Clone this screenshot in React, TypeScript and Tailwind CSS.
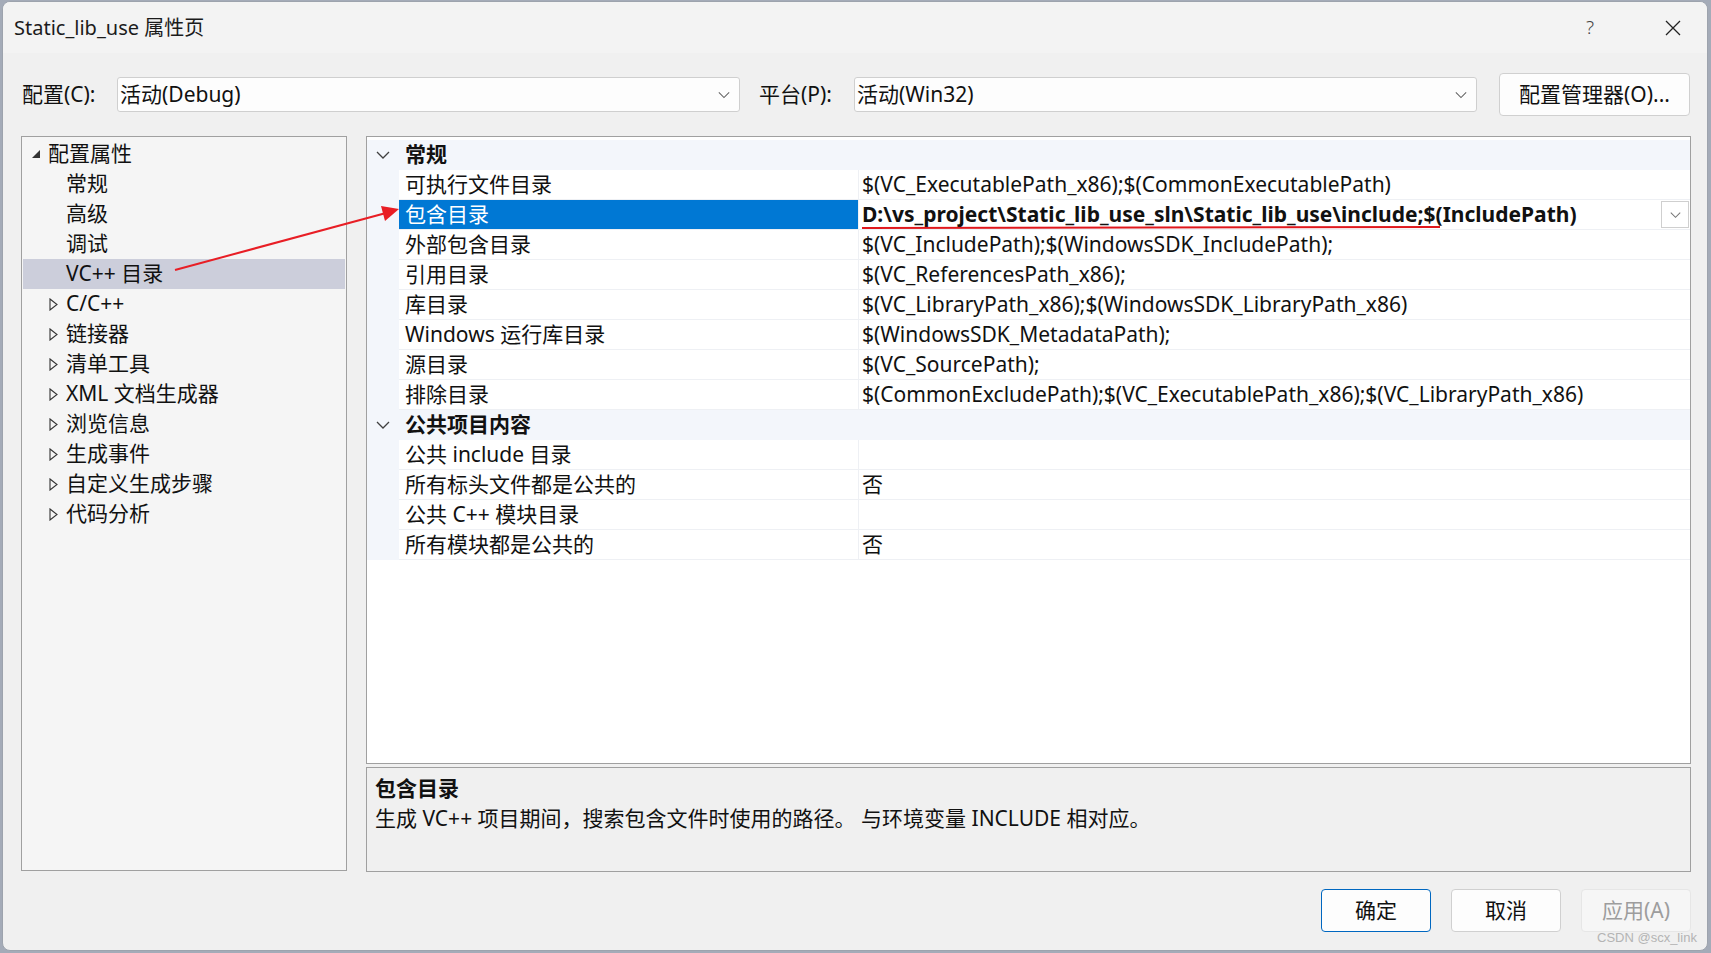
const FONT = { fontFamily: '"Noto Sans", "Noto Sans CJK SC", sans-serif' };

type Row =
  | { kind: 'group'; label: string }
  | { kind: 'prop'; label: string; value: string; selected?: boolean };

const rows: Row[] = [
  { kind: 'group', label: '常规' },
  { kind: 'prop', label: '可执行文件目录', value: '$(VC_ExecutablePath_x86);$(CommonExecutablePath)' },
  { kind: 'prop', label: '包含目录', value: 'D:\\vs_project\\Static_lib_use_sln\\Static_lib_use\\include;$(IncludePath)', selected: true },
  { kind: 'prop', label: '外部包含目录', value: '$(VC_IncludePath);$(WindowsSDK_IncludePath);' },
  { kind: 'prop', label: '引用目录', value: '$(VC_ReferencesPath_x86);' },
  { kind: 'prop', label: '库目录', value: '$(VC_LibraryPath_x86);$(WindowsSDK_LibraryPath_x86)' },
  { kind: 'prop', label: 'Windows 运行库目录', value: '$(WindowsSDK_MetadataPath);' },
  { kind: 'prop', label: '源目录', value: '$(VC_SourcePath);' },
  { kind: 'prop', label: '排除目录', value: '$(CommonExcludePath);$(VC_ExecutablePath_x86);$(VC_LibraryPath_x86)' },
  { kind: 'group', label: '公共项目内容' },
  { kind: 'prop', label: '公共 include 目录', value: '' },
  { kind: 'prop', label: '所有标头文件都是公共的', value: '否' },
  { kind: 'prop', label: '公共 C++ 模块目录', value: '' },
  { kind: 'prop', label: '所有模块都是公共的', value: '否' },
];

const tree = [
  { label: '常规' },
  { label: '高级' },
  { label: '调试' },
  { label: 'VC++ 目录', active: true },
  { label: 'C/C++', expandable: true },
  { label: '链接器', expandable: true },
  { label: '清单工具', expandable: true },
  { label: 'XML 文档生成器', expandable: true },
  { label: '浏览信息', expandable: true },
  { label: '生成事件', expandable: true },
  { label: '自定义生成步骤', expandable: true },
  { label: '代码分析', expandable: true },
];

function Chevron({ className = '', color = '#404040' }: { className?: string; color?: string }) {
  return (
    <svg width="14" height="8" viewBox="0 0 14 8" className={className}>
      <polyline points="1,1 7,7 13,1" fill="none" stroke={color} strokeWidth="1.3" />
    </svg>
  );
}

function SelectBox({ value }: { value: string }) {
  return (
    <div className="w-[623px] h-[35px] bg-[#fdfdfd] border border-[#cfcfcf] rounded-[3px] flex items-center justify-between pl-[2px] pr-[9px]">
      <span className="text-[21px] text-[#111]">{value}</span>
      <Chevron color="#666" className="w-[12px]" />
    </div>
  );
}

export default function App() {
  return (
    <div style={FONT} className="relative w-[1711px] h-[953px] bg-[#a4abb8] pl-[2px] pr-[3px] pt-px pb-[2px]">
      <div className="w-full h-full rounded-[8px] border border-[#9da3ad] bg-[#f0f0f0] overflow-hidden flex flex-col">
        {/* title bar */}
        <div className="h-[51px] bg-[#f3f3f3] flex items-center pl-[11px] pr-[26px] shrink-0">
          <span className="text-[20px] text-[#1b1b1b]">Static_lib_use 属性页</span>
          <div className="flex-1" />
          <span className="text-[19px] text-[#444] font-light mr-[71px]">?</span>
          <svg width="16" height="16" viewBox="0 0 16 16">
            <path d="M1 1 L15 15 M15 1 L1 15" stroke="#222" strokeWidth="1.3" />
          </svg>
        </div>

        {/* config row */}
        <div className="flex items-center h-[43px] mt-[20px] pl-[19px] shrink-0">
          <span className="w-[95px] text-[21px] text-[#111]">配置(C):</span>
          <SelectBox value="活动(Debug)" />
          <span className="w-[95px] ml-[19px] text-[21px] text-[#111]">平台(P):</span>
          <SelectBox value="活动(Win32)" />
          <button className="ml-[22px] w-[191px] h-[43px] bg-[#fdfdfd] border border-[#d0d0d0] rounded-[4px] text-[21px] text-[#111]">
            配置管理器(O)...
          </button>
        </div>

        {/* panels */}
        <div className="flex mt-[20px] pl-[18px] pr-[16px] gap-[19px] h-[736px] shrink-0">
          {/* tree */}
          <div className="w-[326px] h-[735px] bg-[#f5f5f5] border border-[#a0a0a0] pt-[2px] px-px">
            <div className="h-[30px] flex items-center">
              <svg width="10" height="10" viewBox="0 0 10 10" className="ml-[8px]">
                <polygon points="9,1 9,9 1,9" fill="#333" />
              </svg>
              <span className="ml-[7px] text-[21px] text-[#111]">配置属性</span>
            </div>
            {tree.map((t) => (
              <div key={t.label} className={`h-[30px] flex items-center ${t.active ? 'bg-[#cccedb]' : ''}`}>
                <div className="w-[43px] flex justify-end pr-[8px]">
                  {t.expandable && (
                    <svg width="9" height="13" viewBox="0 0 9 13">
                      <polygon points="1,1 8,6.5 1,12" fill="none" stroke="#333" strokeWidth="1.1" />
                    </svg>
                  )}
                </div>
                <span className="text-[21px] text-[#111]">{t.label}</span>
              </div>
            ))}
          </div>

          {/* grid + description */}
          <div className="flex-1 flex flex-col gap-[3px]">
            <div className="h-[628px] bg-white border border-[#a0a0a0] flex flex-col pt-[3px]">
              {rows.map((r, i) =>
                r.kind === 'group' ? (
                  <div key={i} className="h-[30px] bg-[#f3f6fb] flex items-center shrink-0">
                    <div className="w-[32px] flex justify-center">
                      <Chevron />
                    </div>
                    <span className="ml-[6px] text-[21px] font-bold text-[#111]">{r.label}</span>
                  </div>
                ) : (
                  <div key={i} className="h-[30px] flex shrink-0">
                    <div className="w-[32px] bg-[#f3f6fb]" />
                    <div
                      className={`w-[460px] border-b border-r border-[#eef0f4] flex items-center pl-[6px] text-[21px] ${
                        r.selected ? 'bg-[#0078d4] text-white' : 'text-[#111]'
                      }`}
                    >
                      {r.label}
                    </div>
                    <div className="flex-1 border-b border-[#eef0f4] flex items-center pl-[3px] pr-px">
                      <span className={`text-[21px] text-[#111] whitespace-nowrap ${r.selected ? 'font-bold' : ''}`}>{r.value}</span>
                      {r.selected && (
                        <>
                          <div className="flex-1" />
                          <div className="w-[28px] h-[27px] border border-[#cfcfcf] bg-white flex items-center justify-center">
                            <Chevron color="#777" className="w-[11px]" />
                          </div>
                        </>
                      )}
                    </div>
                  </div>
                )
              )}
            </div>
            <div className="h-[105px] bg-[#f0f0f0] border border-[#a0a0a0] px-[8px] pt-[5px]">
              <div className="text-[21px] font-bold text-[#111] leading-[30px]">包含目录</div>
              <div className="text-[21px] text-[#111] leading-[30px]">
                生成 VC++ 项目期间，搜索包含文件时使用的路径。 与环境变量 INCLUDE 相对应。
              </div>
            </div>
          </div>
        </div>

        {/* buttons */}
        <div className="flex justify-end gap-[20px] pr-[16px] mt-[17px]">
          <button className="w-[110px] h-[43px] bg-[#fdfdfd] border border-[#0067c0] rounded-[4px] text-[21px] text-[#111]">确定</button>
          <button className="w-[110px] h-[43px] bg-[#fdfdfd] border border-[#d0d0d0] rounded-[4px] text-[21px] text-[#111]">取消</button>
          <button className="w-[110px] h-[43px] bg-[#f6f6f6] border border-[#e6e6e6] rounded-[4px] text-[21px] text-[#9d9d9d]">应用(A)</button>
        </div>
      </div>

      {/* annotations */}
      <svg className="absolute left-0 top-0 pointer-events-none" width="1711" height="953">
        <line x1="175" y1="270" x2="386" y2="213" stroke="#e81e25" strokeWidth="2" />
        <polygon points="399,209 381,206 385,221" fill="#e81e25" />
        <line x1="862" y1="228" x2="1440" y2="227" stroke="#e0171c" strokeWidth="2" />
      </svg>
      <span
        className="absolute left-[1597px] top-[928px] text-[13px] text-[#b4b4b4]"
        style={{ fontFamily: '"Liberation Sans", sans-serif' }}
      >
        CSDN @scx_link
      </span>
    </div>
  );
}
